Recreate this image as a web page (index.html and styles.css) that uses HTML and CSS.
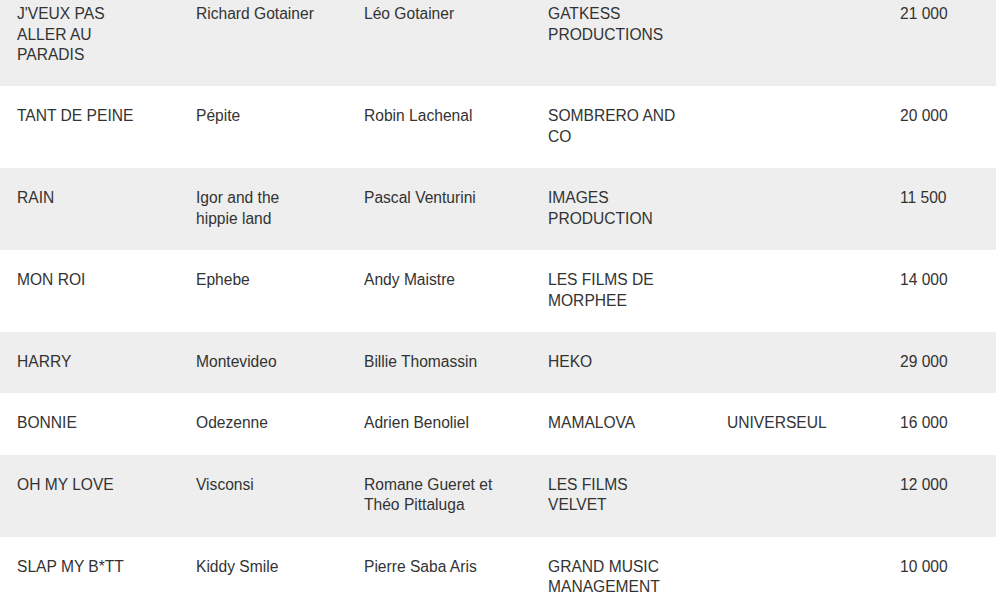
FILE: index.html
```html
<!DOCTYPE html>
<html lang="fr">
<head>
<meta charset="utf-8">
<title>Clips</title>
<link rel="stylesheet" href="styles.css">
</head>
<body>
<table class="clips">
  <colgroup>
    <col class="c-title">
    <col class="c-artist">
    <col class="c-director">
    <col class="c-prod">
    <col class="c-label">
    <col class="c-amount">
  </colgroup>
  <tbody>
    <tr><td>J'VEUX PAS ALLER AU PARADIS</td><td>Richard Gotainer</td><td>Léo Gotainer</td><td>GATKESS PRODUCTIONS</td><td></td><td>21 000</td></tr>
    <tr><td>TANT DE PEINE</td><td>Pépite</td><td>Robin Lachenal</td><td>SOMBRERO AND CO</td><td></td><td>20 000</td></tr>
    <tr><td>RAIN</td><td>Igor and the hippie land</td><td>Pascal Venturini</td><td>IMAGES PRODUCTION</td><td></td><td>11 500</td></tr>
    <tr><td>MON ROI</td><td>Ephebe</td><td>Andy Maistre</td><td>LES FILMS DE MORPHEE</td><td></td><td>14 000</td></tr>
    <tr><td>HARRY</td><td>Montevideo</td><td>Billie Thomassin</td><td>HEKO</td><td></td><td>29 000</td></tr>
    <tr><td>BONNIE</td><td>Odezenne</td><td>Adrien Benoliel</td><td>MAMALOVA</td><td>UNIVERSEUL</td><td>16 000</td></tr>
    <tr><td>OH MY LOVE</td><td>Visconsi</td><td>Romane Gueret et Théo Pittaluga</td><td>LES FILMS VELVET</td><td></td><td>12 000</td></tr>
    <tr><td>SLAP MY B*TT</td><td>Kiddy Smile</td><td>Pierre Saba Aris</td><td>GRAND MUSIC MANAGEMENT</td><td></td><td>10 000</td></tr>
  </tbody>
</table>
</body>
</html>
```
FILE: styles.css
```css
html, body {
  margin: 0;
  padding: 0;
  background: #ffffff;
}

body {
  font-family: "Liberation Sans", Arial, sans-serif;
  font-size: 15.6px;
  line-height: 20.5px;
  color: #333333;
  overflow: hidden;
}

.clips {
  width: 996px;
  margin-top: -16px;
  border-collapse: collapse;
  table-layout: fixed;
}

.c-title { width: 179px; }
.c-artist { width: 168px; }
.c-director { width: 184px; }
.c-prod { width: 179px; }
.c-label { width: 173px; }
.c-amount { width: 113px; }

.clips td {
  padding: 20px 28px 20.9px 17px;
  vertical-align: top;
  text-align: left;
}

.clips tr:nth-child(odd) {
  background: #eeeeee;
}
```
